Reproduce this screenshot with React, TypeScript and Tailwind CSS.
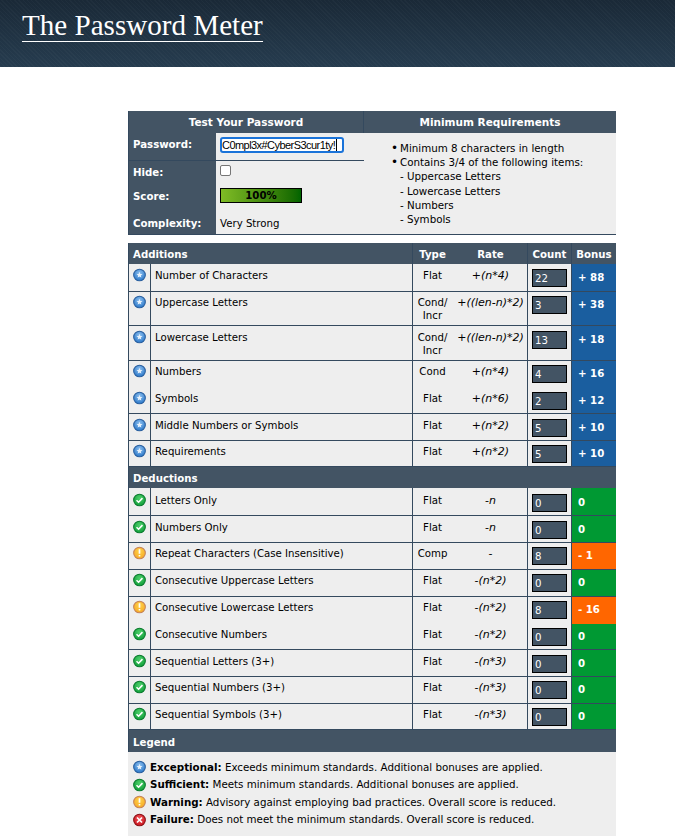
type Status = 'exceptional' | 'sufficient' | 'warning' | 'failure'

function StatusIcon({ status }: { status: Status }) {
  const colors = {
    exceptional: ['#8fc1f0', '#1f6fc4', '#2a5f9e'],
    sufficient: ['#4fd06a', '#0a9a35', '#0b7a2e'],
    warning: ['#ffd24a', '#f5a623', '#c4825a'],
    failure: ['#f0555a', '#c8101a', '#8a1016'],
  }[status]
  const id = `grad-${status}`
  return (
    <svg width="13" height="14" viewBox="0 0 14 14" className="shrink-0">
      <defs>
        <radialGradient id={id} cx="50%" cy="35%" r="70%">
          <stop offset="0%" stopColor={colors[0]} />
          <stop offset="100%" stopColor={colors[1]} />
        </radialGradient>
      </defs>
      <circle cx="7" cy="7" r="6.3" fill={`url(#${id})`} stroke={colors[2]} strokeWidth="1.1" />
      {status === 'exceptional' && (
        <path d="M7 3.6l.9 2.2 2.3.2-1.8 1.5.6 2.3L7 8.6l-2 1.2.6-2.3L3.8 6l2.3-.2z" fill="#e8f2fc" />
      )}
      {status === 'sufficient' && (
        <path d="M3.8 7.2l2.2 2.2 4.2-4.4" fill="none" stroke="#fff" strokeWidth="1.7" />
      )}
      {status === 'warning' && (
        <path d="M7 3v4.8M7 9.2v1.6" fill="none" stroke="#fff" strokeWidth="1.8" />
      )}
      {status === 'failure' && (
        <path d="M4.3 4.3l5.4 5.4M9.7 4.3l-5.4 5.4" fill="none" stroke="#fff" strokeWidth="1.8" />
      )}
    </svg>
  )
}

// table rows in the reference land a pixel up or down from each other
const PAD = {
  tight: { icon: 'pt-[3px]', text: 'pt-[4px]', box: 'pt-[4px]', bonus: 'pt-[6px]' },
  normal: { icon: 'pt-[4px]', text: 'pt-[5px]', box: 'pt-[5px]', bonus: 'pt-[7px]' },
  loose: { icon: 'pt-[5px]', text: 'pt-[6px]', box: 'pt-[6px]', bonus: 'pt-[8px]' },
}

type RowData = {
  status: Status
  label: string
  type: string
  rate: string
  count: string
  bonus: string
  bonusColor: string
  height: string
  pad: keyof typeof PAD
  noBorder?: boolean
}

const BLUE = 'bg-[#1a5e9f]'
const GREEN = 'bg-[#009933]'
const ORANGE = 'bg-[#ff6600]'

const additions: RowData[] = [
  { status: 'exceptional', label: 'Number of Characters', type: 'Flat', rate: '+(n*4)', count: '22', bonus: '+ 88', bonusColor: BLUE, height: 'h-[28px]', pad: 'normal' },
  { status: 'exceptional', label: 'Uppercase Letters', type: 'Cond/ Incr', rate: '+((len-n)*2)', count: '3', bonus: '+ 38', bonusColor: BLUE, height: 'h-[34px]', pad: 'tight' },
  { status: 'exceptional', label: 'Lowercase Letters', type: 'Cond/ Incr', rate: '+((len-n)*2)', count: '13', bonus: '+ 18', bonusColor: BLUE, height: 'h-[35px]', pad: 'normal' },
  { status: 'exceptional', label: 'Numbers', type: 'Cond', rate: '+(n*4)', count: '4', bonus: '+ 16', bonusColor: BLUE, height: 'h-[26px]', pad: 'tight', noBorder: true },
  { status: 'exceptional', label: 'Symbols', type: 'Flat', rate: '+(n*6)', count: '2', bonus: '+ 12', bonusColor: BLUE, height: 'h-[27px]', pad: 'normal' },
  { status: 'exceptional', label: 'Middle Numbers or Symbols', type: 'Flat', rate: '+(n*2)', count: '5', bonus: '+ 10', bonusColor: BLUE, height: 'h-[27px]', pad: 'normal' },
  { status: 'exceptional', label: 'Requirements', type: 'Flat', rate: '+(n*2)', count: '5', bonus: '+ 10', bonusColor: BLUE, height: 'h-[26px]', pad: 'tight' },
]

const deductions: RowData[] = [
  { status: 'sufficient', label: 'Letters Only', type: 'Flat', rate: '-n', count: '0', bonus: '0', bonusColor: GREEN, height: 'h-[28px]', pad: 'loose' },
  { status: 'sufficient', label: 'Numbers Only', type: 'Flat', rate: '-n', count: '0', bonus: '0', bonusColor: GREEN, height: 'h-[27px]', pad: 'normal' },
  { status: 'warning', label: 'Repeat Characters (Case Insensitive)', type: 'Comp', rate: '-', count: '8', bonus: '- 1', bonusColor: ORANGE, height: 'h-[27px]', pad: 'tight' },
  { status: 'sufficient', label: 'Consecutive Uppercase Letters', type: 'Flat', rate: '-(n*2)', count: '0', bonus: '0', bonusColor: GREEN, height: 'h-[27px]', pad: 'tight' },
  { status: 'warning', label: 'Consecutive Lowercase Letters', type: 'Flat', rate: '-(n*2)', count: '8', bonus: '- 16', bonusColor: ORANGE, height: 'h-[27px]', pad: 'tight', noBorder: true },
  { status: 'sufficient', label: 'Consecutive Numbers', type: 'Flat', rate: '-(n*2)', count: '0', bonus: '0', bonusColor: GREEN, height: 'h-[26px]', pad: 'tight' },
  { status: 'sufficient', label: 'Sequential Letters (3+)', type: 'Flat', rate: '-(n*3)', count: '0', bonus: '0', bonusColor: GREEN, height: 'h-[27px]', pad: 'normal' },
  { status: 'sufficient', label: 'Sequential Numbers (3+)', type: 'Flat', rate: '-(n*3)', count: '0', bonus: '0', bonusColor: GREEN, height: 'h-[27px]', pad: 'tight' },
  { status: 'sufficient', label: 'Sequential Symbols (3+)', type: 'Flat', rate: '-(n*3)', count: '0', bonus: '0', bonusColor: GREEN, height: 'h-[26px]', pad: 'tight' },
]

const GRID = 'grid grid-cols-[23px_262px_41px_74px_44px_44px]'

function Rate({ rate }: { rate: string }) {
  const match = rate.match(/^([+-])(.+)$/)
  if (!match) return <span>{rate}</span>
  return (
    <span>
      {match[1]}
      <span className="italic">{match[2]}</span>
    </span>
  )
}

function Row({ row }: { row: RowData }) {
  const line = row.noBorder ? '' : 'border-b border-[#34495e]'
  const pad = PAD[row.pad]
  return (
    <div className={`${GRID} ${row.height} bg-[#eeeeee] text-black`}>
      <div className={`border-l border-r border-[#34495e] pl-[4px] ${pad.icon} ${line}`}>
        <StatusIcon status={row.status} />
      </div>
      <div className={`pl-[4px] ${pad.text} border-r border-[#34495e] whitespace-nowrap ${line}`}>{row.label}</div>
      <div className={`${pad.text} pr-[2px] text-center ${line}`}>{row.type}</div>
      <div className={`${pad.text} text-center whitespace-nowrap text-[11px] border-r border-[#34495e] ${line}`}>
        <Rate rate={row.rate} />
      </div>
      <div className={`pl-[4px] ${pad.box} border-r border-[#34495e] ${line}`}>
        <div className="w-[35px] h-[18px] bg-[#435464] border border-black text-white pl-[2px] leading-[18px]">
          {row.count}
        </div>
      </div>
      <div className={`${row.bonusColor} text-white font-bold pl-[6px] ${pad.bonus} ${line}`}>{row.bonus}</div>
    </div>
  )
}

function SectionHeader({ title, height }: { title: string; height: string }) {
  return (
    <div className={`${height} bg-[#435464] text-white font-bold pl-[4px] pt-[2px] flex items-center border-l border-[#34495e]`}>
      {title}
    </div>
  )
}

const legend: { status: Status; name: string; text: string }[] = [
  { status: 'exceptional', name: 'Exceptional:', text: 'Exceeds minimum standards. Additional bonuses are applied.' },
  { status: 'sufficient', name: 'Sufficient:', text: 'Meets minimum standards. Additional bonuses are applied.' },
  { status: 'warning', name: 'Warning:', text: 'Advisory against employing bad practices. Overall score is reduced.' },
  { status: 'failure', name: 'Failure:', text: 'Does not meet the minimum standards. Overall score is reduced.' },
]

export default function App() {
  return (
    <div className="h-[836px] overflow-hidden bg-white text-[10.2px] leading-[13px] font-['DejaVu_Sans',sans-serif]">
      <header className="h-[67px] bg-[repeating-linear-gradient(45deg,rgba(255,255,255,0.025)_0_1px,transparent_1px_3px),linear-gradient(#1a2937,#263c4f)] pl-[22px] pt-[9px]">
        <h1 className="inline-block border-b border-white text-white text-[29.1px] leading-[32px] font-['Liberation_Serif',serif]">
          The Password Meter
        </h1>
      </header>

      <main className="ml-[128px] w-[488px] mt-[44px]">
        {/* test box */}
        <section className="grid grid-cols-[88px_148px_252px] border-b border-[#34495e]">
          <div className="col-span-2 h-[22px] bg-[#435464] text-white font-bold text-[10.5px] flex items-center justify-center border-l border-r border-[#34495e]">
            Test Your Password
          </div>
          <div className="h-[22px] bg-[#435464] text-white font-bold text-[10.5px] flex items-center justify-center">
            Minimum Requirements
          </div>

          <div className="col-span-2 grid grid-cols-[88px_148px] border-r border-[#34495e]">
            <div className="h-[28px] bg-[#435464] text-white font-bold pl-[4px] pt-[5px] border-l border-b border-[#34495e]">
              Password:
            </div>
            <div className="h-[28px] bg-[#eeeeee] pl-[4px] pt-[4px] border-b border-[#34495e]">
              <div className="w-[124px] h-[16px] bg-white border-2 border-[#1a73d9] rounded-[3px] flex items-center text-[11px] tracking-[-0.55px] text-black font-['Liberation_Sans',sans-serif] whitespace-nowrap">
                C0mpl3x#CyberS3cur1ty!
                <span className="w-px h-[12px] bg-black ml-[1px]" />
              </div>
            </div>
            <div className="h-[24px] bg-[#435464] text-white font-bold pl-[4px] pt-[5px] border-l border-[#34495e]">Hide:</div>
            <div className="h-[24px] bg-[#eeeeee] pl-[4px] pt-[4px]">
              <div className="w-[11px] h-[11px] bg-white border border-[#767676] rounded-[2px]" />
            </div>
            <div className="h-[24px] bg-[#435464] text-white font-bold pl-[4px] pt-[5px] border-l border-[#34495e]">Score:</div>
            <div className="h-[24px] bg-[#eeeeee] pl-[4px] pt-[3px]">
              <div className="w-[82px] h-[15px] border border-black bg-gradient-to-r from-[#7fbc25] to-[#006400] text-center font-bold text-black leading-[13px]">
                100%
              </div>
            </div>
            <div className="h-[25px] bg-[#435464] text-white font-bold pl-[4px] pt-[8px] border-l border-[#34495e]">Complexity:</div>
            <div className="h-[25px] bg-[#eeeeee] pl-[4px] pt-[8px] text-black">Very Strong</div>
          </div>

          <div className="bg-[#eeeeee] pl-[27px] pt-[9px] text-black text-[10.3px]">
            <ul className="flex flex-col">
              {['Minimum 8 characters in length', 'Contains 3/4 of the following items:'].map((t) => (
                <li key={t} className="h-[14px] flex">
                  <span className="w-[9px] text-[12px]">•</span>
                  {t}
                </li>
              ))}
              <li className="h-[15px] pl-[9px]">- Uppercase Letters</li>
              <li className="h-[14px] pl-[9px]">- Lowercase Letters</li>
              <li className="h-[14px] pl-[9px]">- Numbers</li>
              <li className="h-[14px] pl-[9px]">- Symbols</li>
            </ul>
          </div>
        </section>

        {/* score table */}
        <section className="mt-[8px]">
          <div className={`${GRID} h-[21px] bg-[#435464] text-white font-bold items-stretch`}>
            <div className="col-span-2 pl-[4px] pt-[2px] flex items-center border-l border-r border-[#34495e]">Additions</div>
            <div className="pt-[2px] pr-[2px] flex items-center justify-center">Type</div>
            <div className="pt-[2px] flex items-center justify-center border-r border-[#34495e]">Rate</div>
            <div className="pt-[2px] flex items-center justify-center border-r border-[#34495e]">Count</div>
            <div className="pt-[2px] flex items-center justify-center">Bonus</div>
          </div>
          {additions.map((r) => (
            <Row key={r.label} row={r} />
          ))}
          <SectionHeader title="Deductions" height="h-[21px]" />
          {deductions.map((r) => (
            <Row key={r.label} row={r} />
          ))}
          <SectionHeader title="Legend" height="h-[22px]" />
          <div className="bg-[#eeeeee] h-[90px] pl-[5px] pt-[8px] flex flex-col gap-[3px] text-black text-[10.3px]">
            {legend.map((l) => (
              <div key={l.name} className="flex items-center gap-[4px] h-[14.5px] whitespace-nowrap">
                <StatusIcon status={l.status} />
                <span>
                  <b>{l.name}</b> {l.text}
                </span>
              </div>
            ))}
          </div>
        </section>
      </main>
    </div>
  )
}
